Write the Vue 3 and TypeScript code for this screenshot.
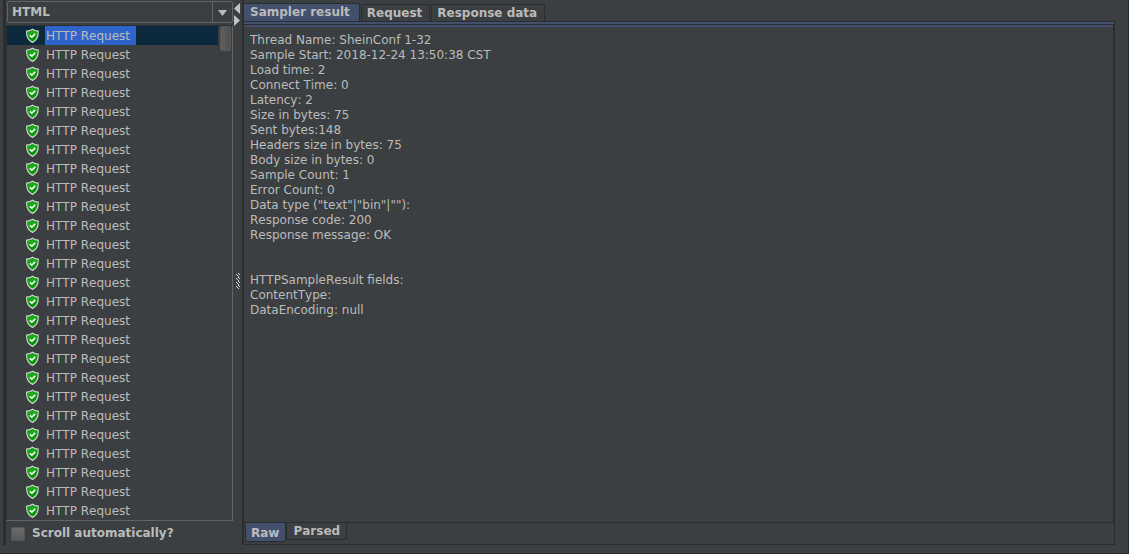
<script setup lang="ts">
import { ref } from 'vue'

interface Sample {
  id: number
  label: string
}

const samples: Sample[] = Array.from({ length: 26 }, (_, i) => ({ id: i + 1, label: 'HTTP Request' }))
const selected = ref(1)
const renderer = ref('HTML')
const autoScroll = ref(false)

const tabs = ['Sampler result', 'Request', 'Response data']
const activeTab = ref(tabs[0])
const views = ['Raw', 'Parsed']
const activeView = ref(views[0])

const result = [
  'Thread Name: SheinConf 1-32',
  'Sample Start: 2018-12-24 13:50:38 CST',
  'Load time: 2',
  'Connect Time: 0',
  'Latency: 2',
  'Size in bytes: 75',
  'Sent bytes:148',
  'Headers size in bytes: 75',
  'Body size in bytes: 0',
  'Sample Count: 1',
  'Error Count: 0',
  'Data type ("text"|"bin"|""): ',
  'Response code: 200',
  'Response message: OK',
  '',
  '',
  'HTTPSampleResult fields:',
  'ContentType: ',
  'DataEncoding: null',
].join('\n')
</script>

<template>
  <div class="window">
    <main class="split">
      <section class="left">
        <div class="combo">
          <select v-model="renderer" aria-label="Renderer">
            <option>HTML</option>
            <option>Text</option>
          </select>
          <svg class="combo-arrow" width="20" height="20" viewBox="0 0 20 20" aria-hidden="true">
            <path d="M0.5 0V20" stroke="#646464" />
            <path d="M6 8H15L10.5 14Z" fill="#bbb" />
          </svg>
        </div>
        <div class="tree">
          <ul>
            <li v-for="s in samples" :key="s.id">
              <button class="row" :class="{ on: s.id === selected }" @click="selected = s.id">
                <svg class="shield" width="14" height="16" viewBox="0 0 14 16" aria-hidden="true">
                  <path d="M7.5 1.2C5.9 2.6 3.9 3.1 1.7 3.1C1.3 8.2 2.3 11.8 7.5 14.4C12.7 11.8 13.5 8.2 13.2 3.1C11.1 3.1 9.1 2.6 7.5 1.2Z" fill="#069608" stroke="#d0d4ce" stroke-width="1.2" />
                  <path d="M7.5 2.7C6.1 3.7 4.5 4.1 2.8 4.2C2.7 6 2.8 7.3 3.2 8.4C6 9 9.5 8 12.2 5.5V4.2C10.5 4.1 8.9 3.7 7.5 2.7Z" fill="#1ca81f" />
                  <path d="M4.8 7.3L6.9 9.2L10.2 5.9" fill="none" stroke="#fff" stroke-width="1.6" />
                </svg>
                <span class="row-label">{{ s.label }}</span>
              </button>
            </li>
          </ul>
          <div class="scrollbar"><div class="thumb"></div></div>
        </div>
        <label class="auto">
          <input v-model="autoScroll" type="checkbox" />
          <span>Scroll automatically?</span>
        </label>
      </section>

      <div class="divider">
        <svg class="arrows" width="8" height="24" viewBox="0 0 8 24" aria-hidden="true">
          <path d="M7 0V11L1 5.5Z" fill="#c4c4c4" />
          <path d="M1 12V23L7 17.5Z" fill="#c4c4c4" />
        </svg>
        <svg class="grip" width="5" height="16" viewBox="0 0 5 16" shape-rendering="crispEdges" aria-hidden="true">
          <g v-for="n in 4" :key="n" fill="#d8d8d8">
            <rect x="2" :y="n * 4 - 4" width="1" height="1" />
            <rect x="0" :y="n * 4 - 3" width="1" height="1" />
            <rect x="3" :y="n * 4 - 3" width="1" height="1" />
            <rect x="1" :y="n * 4 - 2" width="1" height="1" />
            <rect x="2" :y="n * 4 - 1" width="1" height="1" />
          </g>
        </svg>
      </div>

      <section class="right">
        <nav class="tabs" role="tablist">
          <button v-for="t in tabs" :key="t" class="tab" :class="{ on: t === activeTab }" role="tab" :aria-selected="t === activeTab" @click="activeTab = t">{{ t }}</button>
        </nav>
        <div class="pane">
          <pre class="text">{{ result }}</pre>
          <nav class="views" role="tablist">
            <button v-for="v in views" :key="v" class="view" :class="{ on: v === activeView }" role="tab" :aria-selected="v === activeView" @click="activeView = v">{{ v }}</button>
          </nav>
        </div>
      </section>
    </main>
  </div>
</template>

<style>
body {
  background: #3c3f41;
}
</style>

<style scoped>
.window {
  box-sizing: border-box;
  height: 100vh;
  padding: 0 13px 8px 3px;
  display: flex;
  overflow: hidden;
  background: #3c3f41;
  border-right: 1px solid #292b2d;
  border-bottom: 1px solid #292b2d;
  color: #bbb;
  font: 12px/15px "DejaVu Sans", sans-serif;
  font-kerning: none;
}
button,
select {
  font: inherit;
  font-kerning: none;
  color: inherit;
  margin: 0;
  border: 0;
  border-radius: 0;
  background: none;
}
.split {
  flex: 1;
  min-width: 0;
  display: flex;
  border-left: 3px solid #2b2d2f;
}
.left {
  width: 227px;
  flex: none;
  display: flex;
  flex-direction: column;
  padding-top: 1px;
}
.combo {
  position: relative;
  margin: 0 0 2px 1px;
  height: 22px;
}
.combo select {
  appearance: none;
  box-sizing: border-box;
  width: 100%;
  height: 22px;
  padding: 1px 24px 0 4px;
  border: 1px solid #646464;
  border-radius: 2px;
  font-weight: bold;
}
.combo-arrow {
  position: absolute;
  top: 1px;
  right: 1px;
  pointer-events: none;
}
.tree {
  flex: 1;
  min-height: 0;
  display: flex;
  overflow: hidden;
  border: 1px solid #646464;
  border-top-color: #2b2d2f;
  border-left-color: #2b2d2f;
}
.tree ul {
  flex: 1;
  min-width: 0;
  margin: 0;
  padding: 0;
  list-style: none;
}
.row {
  display: flex;
  align-items: center;
  width: 100%;
  height: 19px;
  padding: 0 0 0 18px;
  text-align: left;
}
.row.on {
  background: #0d293e;
}
.shield {
  flex: none;
  margin-right: 6px;
}
.row-label {
  box-sizing: border-box;
  min-width: 91px;
  height: 19px;
  padding: 1px 3px 0 1px;
  line-height: 18px;
}
.row.on .row-label {
  background: #2f65ca;
}
.scrollbar {
  width: 14px;
  flex: none;
}
.thumb {
  height: 25px;
  margin: 0 1px 0 2px;
  box-sizing: border-box;
  border: 1px solid #585858;
  border-radius: 2px;
  background: linear-gradient(90deg, #5f5f5f, #505050);
}
.auto {
  display: flex;
  align-items: center;
  height: 24px;
  padding: 1px 0 0 5px;
  box-sizing: border-box;
  gap: 7px;
  font-weight: bold;
}
.auto input {
  appearance: none;
  width: 14px;
  height: 14px;
  margin: 0;
  box-sizing: border-box;
  border: 1px solid #555;
  border-radius: 1px;
  background: linear-gradient(#6b6b6b, #595959);
}
.auto input:checked {
  background: #bbb;
}
.divider {
  flex: none;
  width: 9px;
  display: flex;
  flex-direction: column;
  padding-bottom: 10px;
}
.arrows {
  margin-top: 3px;
}
.grip {
  margin: auto 0 auto 3px;
}
.right {
  flex: 1;
  min-width: 0;
  display: flex;
  flex-direction: column;
  padding-top: 3px;
  border-left: 2px solid #2b2d2f;
}
.tabs {
  display: flex;
  align-items: flex-end;
  gap: 1px;
  height: 18px;
}
.tab {
  box-sizing: border-box;
  height: 17px;
  padding: 1px 7px 0 5px;
  border: 1px solid #2b2d2f;
  border-bottom: 0;
  border-radius: 2px 2px 0 0;
  font-weight: bold;
  white-space: nowrap;
}
.tab.on {
  height: 19px;
  padding: 0 9px 2px 6px;
  border-left: 0;
  margin-bottom: -1px;
  background: #42506e;
}
.pane {
  flex: 1;
  min-height: 0;
  display: flex;
  flex-direction: column;
  border: 1px solid #2b2d2f;
  border-left: 0;
}
.pane::before {
  content: "";
  height: 2px;
  flex: none;
  background: #42506e;
}
.text {
  flex: 1;
  min-height: 0;
  margin: 0;
  padding: 8px 6px 5px;
  overflow: hidden;
  font: inherit;
  font-kerning: none;
  border: 1px solid #2b2d2f;
  border-left: 0;
  box-shadow: inset 0 2px #42506e;
}
.views {
  flex: none;
  display: flex;
  align-items: flex-start;
  height: 21px;
  padding-left: 1px;
}
.view {
  box-sizing: border-box;
  height: 17px;
  padding: 1px 6px 0;
  border: 1px solid #2b2d2f;
  border-top: 0;
  border-radius: 0 0 3px 3px;
  font-weight: bold;
}
.view.on {
  height: 19px;
  padding: 3px 6px 1px 5px;
  background: #42506e;
}
</style>
